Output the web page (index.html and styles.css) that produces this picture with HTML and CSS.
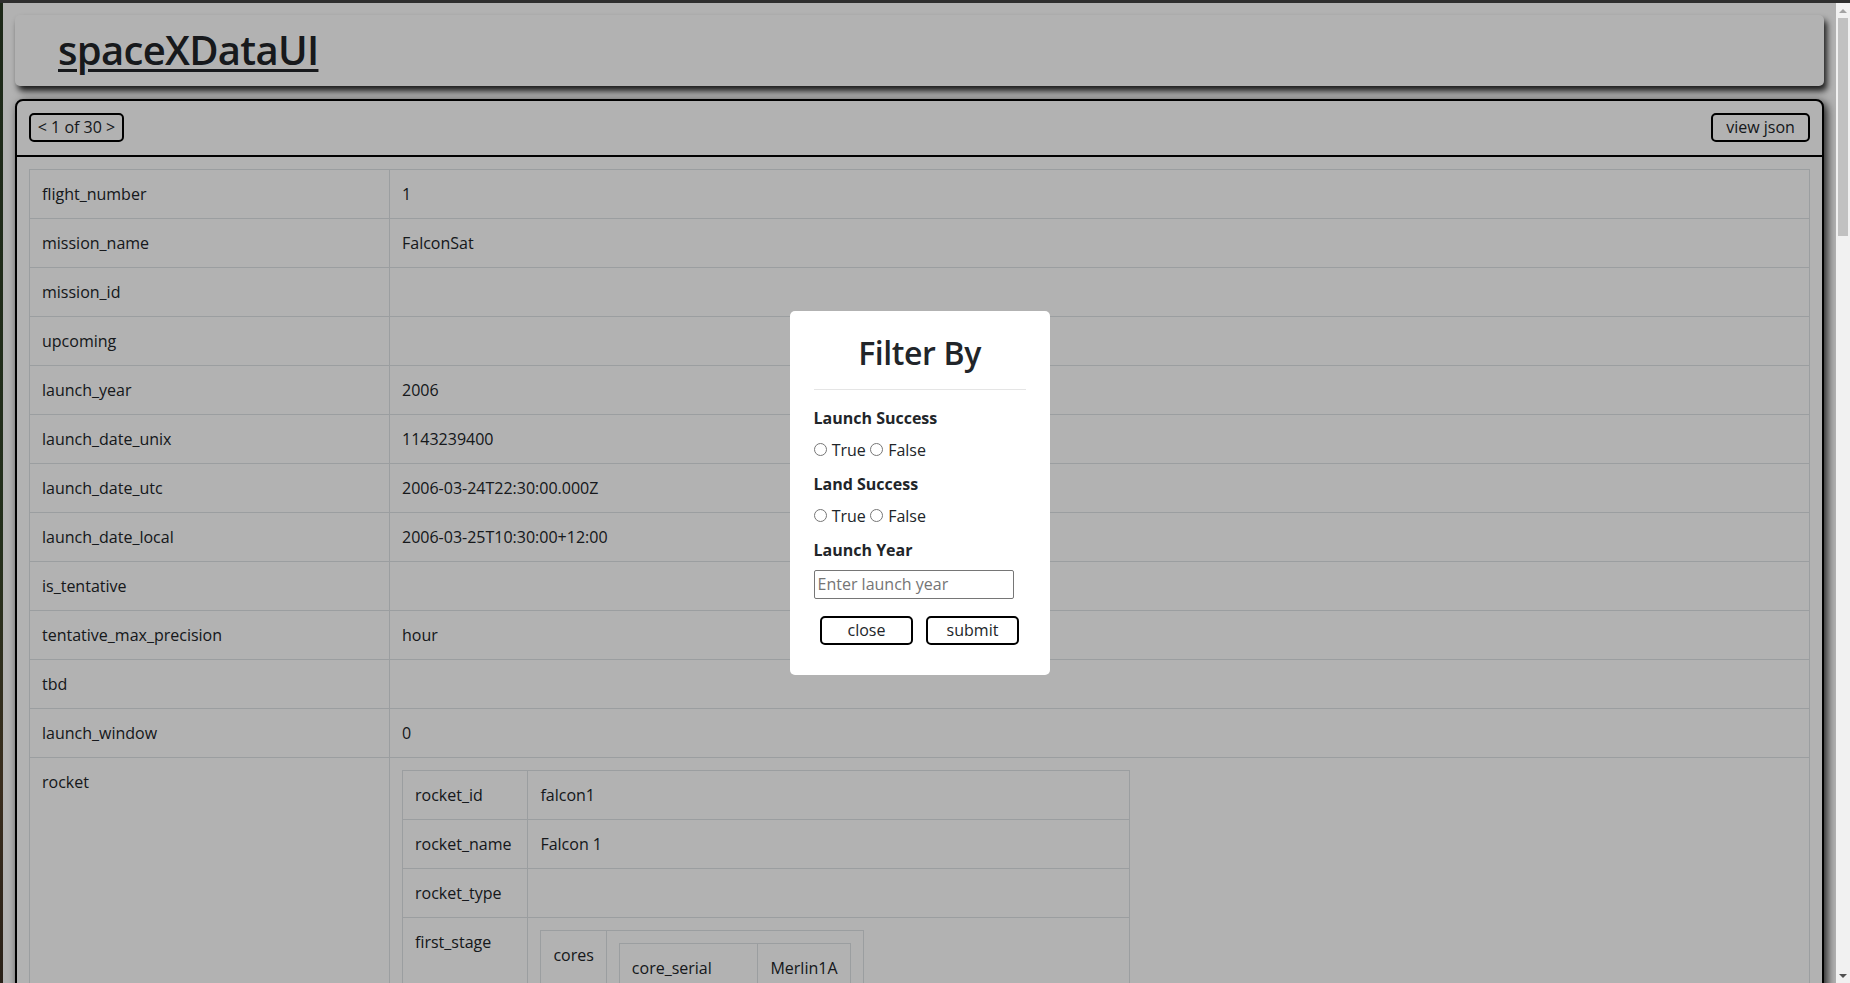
FILE: index.html
```html
<!DOCTYPE html>
<html lang="en">
<head>
<meta charset="utf-8">
<title>spaceXDataUI</title>
<link rel="stylesheet" href="styles.css">
</head>
<body>
<div class="screen">
  <div class="topbar"></div>
  <div class="frame">
    <div class="edge"></div>
    <div class="viewport">
      <div class="page">
        <header class="brand-card">
          <a class="brand" href="#">spaceXDataUI</a>
        </header>
        <section class="data-card">
          <div class="toolbar">
            <button class="btn-outline pager" type="button">&lt; 1 of 30 &gt;</button>
            <button class="btn-outline json-btn" type="button">view json</button>
          </div>
          <div class="card-body">
            <table class="kv main">
              <tbody>
                <tr><td class="key main-key">flight_number</td><td>1</td></tr>
                <tr><td class="key">mission_name</td><td>FalconSat</td></tr>
                <tr><td class="key">mission_id</td><td></td></tr>
                <tr><td class="key">upcoming</td><td></td></tr>
                <tr><td class="key">launch_year</td><td>2006</td></tr>
                <tr><td class="key">launch_date_unix</td><td>1143239400</td></tr>
                <tr><td class="key">launch_date_utc</td><td>2006-03-24T22:30:00.000Z</td></tr>
                <tr><td class="key">launch_date_local</td><td>2006-03-25T10:30:00+12:00</td></tr>
                <tr><td class="key">is_tentative</td><td></td></tr>
                <tr><td class="key">tentative_max_precision</td><td>hour</td></tr>
                <tr><td class="key">tbd</td><td></td></tr>
                <tr><td class="key">launch_window</td><td>0</td></tr>
                <tr>
                  <td class="key">rocket</td>
                  <td>
                    <table class="kv rocket">
                      <tbody>
                        <tr><td class="key rocket-key">rocket_id</td><td>falcon1</td></tr>
                        <tr><td class="key">rocket_name</td><td>Falcon 1</td></tr>
                        <tr><td class="key">rocket_type</td><td></td></tr>
                        <tr>
                          <td class="key">first_stage</td>
                          <td>
                            <table class="kv cores">
                              <tbody>
                                <tr>
                                  <td class="key cores-key">cores</td>
                                  <td>
                                    <table class="kv core">
                                      <tbody>
                                        <tr><td class="key core-key">core_serial</td><td>Merlin1A</td></tr>
                                        <tr><td class="key">flight</td><td>1</td></tr>
                                        <tr><td class="key">block</td><td></td></tr>
                                        <tr><td class="key">gridfins</td><td></td></tr>
                                        <tr><td class="key">legs</td><td></td></tr>
                                        <tr><td class="key">reused</td><td></td></tr>
                                        <tr><td class="key">land_success</td><td></td></tr>
                                        <tr><td class="key">landing_intent</td><td></td></tr>
                                        <tr><td class="key">landing_type</td><td></td></tr>
                                        <tr><td class="key">landing_vehicle</td><td></td></tr>
                                      </tbody>
                                    </table>
                                  </td>
                                </tr>
                              </tbody>
                            </table>
                          </td>
                        </tr>
                        <tr><td class="key">second_stage</td><td>block 1</td></tr>
                        <tr><td class="key">fairings</td><td>reused: false</td></tr>
                      </tbody>
                    </table>
                  </td>
                </tr>
                <tr><td class="key">ships</td><td></td></tr>
                <tr><td class="key">launch_site</td><td>kwajalein_atoll</td></tr>
                <tr><td class="key">launch_success</td><td></td></tr>
                <tr><td class="key">details</td><td>Engine failure at 33 seconds and loss of vehicle</td></tr>
              </tbody>
            </table>
          </div>
        </section>
      </div>

      <div class="backdrop">
        <form class="modal">
          <h2 class="modal-title">Filter By</h2>
          <hr class="divider">
          <div class="field-label">Launch Success</div>
          <div class="radios">
            <input type="radio" name="launch" class="radio"> True
            <input type="radio" name="launch" class="radio"> False
          </div>
          <div class="field-label">Land Success</div>
          <div class="radios">
            <input type="radio" name="land" class="radio"> True
            <input type="radio" name="land" class="radio"> False
          </div>
          <div class="field-label">Launch Year</div>
          <input class="year-input" type="text" placeholder="Enter launch year">
          <div class="actions">
            <button class="btn-outline modal-btn" type="button">close</button>
            <button class="btn-outline modal-btn" type="button">submit</button>
          </div>
        </form>
      </div>
    </div>
    <div class="scrollbar">
      <div class="sb-btn"><span class="arrow-up"></span></div>
      <div class="sb-track"><div class="sb-thumb"></div></div>
      <div class="sb-btn"><span class="arrow-down"></span></div>
    </div>
  </div>
</div>
</body>
</html>
```

FILE: styles.css
```css
* { box-sizing: border-box; }

html, body {
  margin: 0;
  height: 100%;
  overflow: hidden;
}

body {
  font-family: "Open Sans", "Noto Sans", sans-serif;
  font-size: 16px;
  line-height: 1.5;
  color: #212529;
  background: #262626;
}

.screen {
  display: flex;
  flex-direction: column;
  height: 983px;
}

.topbar {
  height: 3px;
  background: #2e2e2e;
  flex: none;
}

.frame {
  display: flex;
  flex: 1;
  min-height: 0;
}

.edge {
  width: 3px;
  flex: none;
  background: linear-gradient(to bottom, #1c2818 0%, #24301c 55%, #3a2d1e 80%, #2a2118 100%);
}

.viewport {
  position: relative;
  flex: 1;
  overflow: hidden;
  background: #fff;
}

.page {
  padding: 12px;
}

/* header card */
.brand-card {
  background: #fff;
  border-radius: 5px;
  box-shadow: 3px 5px 6px rgba(0, 0, 0, 0.85);
  padding: 11px 43px 12px;
  margin-bottom: 13px;
}

.brand {
  font-size: 40px;
  line-height: 48px;
  font-weight: 600;
  letter-spacing: -0.7px;
  color: #212529;
  text-decoration: underline;
  text-decoration-thickness: 3px;
  text-underline-offset: 4px;
}

/* data card */
.data-card {
  border: 2px solid #000;
  border-radius: 8px;
  background: #fff;
  box-shadow: 3px 3px 10px rgba(0, 0, 0, 0.85);
}

.toolbar {
  display: flex;
  justify-content: space-between;
  align-items: center;
  padding: 12px 12px 13px;
  border-bottom: 2px solid #000;
}

.btn-outline {
  font-family: "Open Sans", "Noto Sans", sans-serif;
  font-size: 16px;
  line-height: 25px;
  height: 29px;
  padding: 0;
  border: 2px solid #000;
  border-radius: 5px;
  background: transparent;
  color: #212529;
  text-align: center;
}

.pager { width: 95px; }
.json-btn { width: 99px; }

.card-body {
  padding: 12px;
}

/* tables */
.kv {
  border-collapse: collapse;
  color: #212529;
}

.kv td {
  border: 1px solid #dee2e6;
  padding: 12px;
  line-height: 24px;
  vertical-align: top;
  text-align: left;
}

.main {
  width: 100%;
}

.main-key { width: 360px; }

.rocket { width: 728px; }
.rocket-key { width: 125px; }

.cores { width: 319px; }
.cores-key { width: 62px; }

.core { width: 230px; }
.core-key { width: 138px; }

/* modal */
.backdrop {
  position: absolute;
  inset: 0;
  background: rgba(0, 0, 0, 0.3);
  display: flex;
  align-items: center;
  justify-content: center;
}

.modal {
  width: 260px;
  background: #fff;
  border-radius: 5px;
  padding: 23px 24px 30px;
  margin: 0;
}

.modal-title {
  margin: 0;
  font-size: 32px;
  line-height: 38.4px;
  font-weight: 600;
  letter-spacing: -0.4px;
  text-align: center;
}

.divider {
  margin: 16px 0;
  border: 0;
  border-top: 1px solid rgba(0, 0, 0, 0.1);
  height: 0;
}

.field-label {
  font-weight: 700;
  line-height: 24px;
  margin-bottom: 8px;
}

.radios {
  line-height: 25px;
  height: 25px;
  margin-bottom: 9px;
  white-space: nowrap;
}

.radio {
  margin: 0 1px 0 0;
  width: 13px;
  height: 13px;
}

.year-input {
  display: block;
  width: 200px;
  height: 29px;
  border: 1px solid #767676;
  border-radius: 2px;
  padding: 1px 3px;
  font-family: "Open Sans", "Noto Sans", sans-serif;
  font-size: 16px;
  color: #212529;
  background: #fff;
}

.year-input::placeholder {
  color: #757575;
}

.actions {
  display: flex;
  justify-content: center;
  gap: 13px;
  margin-top: 17px;
}

.modal-btn { width: 93px; }

/* scrollbar */
.scrollbar {
  width: 14px;
  flex: none;
  display: flex;
  flex-direction: column;
  background: #f1f1f1;
}

.sb-btn {
  height: 15px;
  display: flex;
  align-items: center;
  justify-content: center;
  flex: none;
}

.arrow-up {
  width: 0;
  height: 0;
  border-left: 4px solid transparent;
  border-right: 4px solid transparent;
  border-bottom: 4px solid #a3a3a3;
}

.arrow-down {
  width: 0;
  height: 0;
  border-left: 4px solid transparent;
  border-right: 4px solid transparent;
  border-top: 4px solid #505050;
}

.sb-track {
  flex: 1;
  padding: 0 2px;
}

.sb-thumb {
  height: 218px;
  background: #c1c1c1;
}
```
